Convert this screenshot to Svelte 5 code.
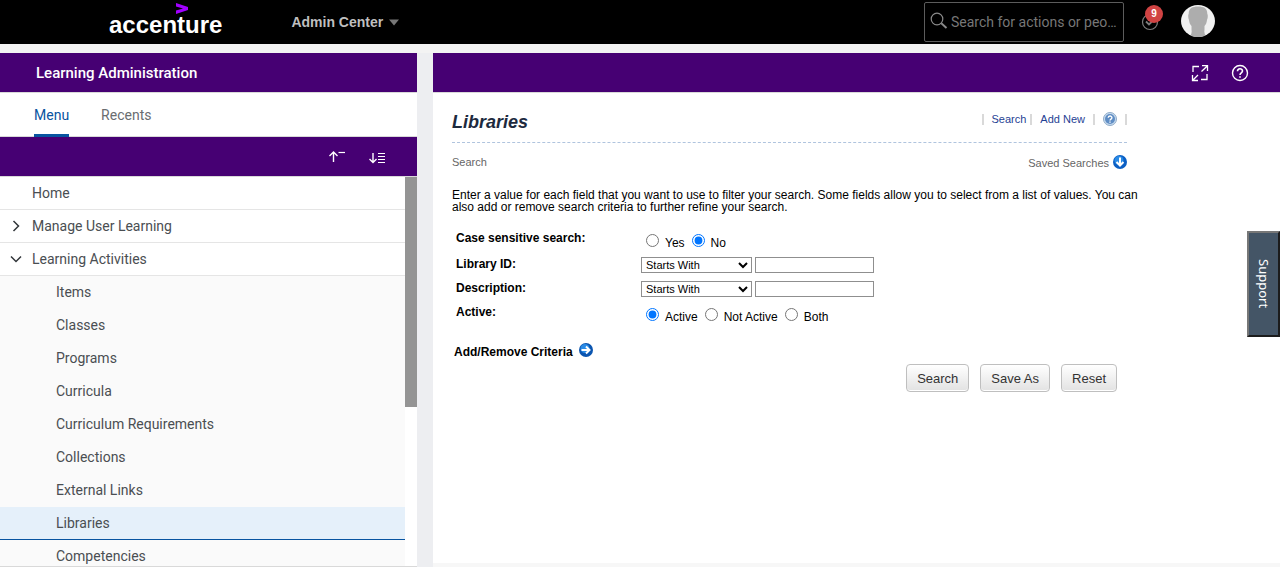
<script>
  const activities = [
    'Items',
    'Classes',
    'Programs',
    'Curricula',
    'Curriculum Requirements',
    'Collections',
    'External Links',
    'Libraries',
    'Competencies'
  ];
  let current = $state('Libraries');
  let tab = $state('Menu');
  let caseSensitive = $state('No');
  let active = $state('Active');
</script>

<div class="page">
  <header class="topbar">
    <a class="logo" href="#home" aria-label="accenture">
      <svg class="caret" width="14" height="13" viewBox="0 0 14 13" aria-hidden="true">
        <path d="M1 1 L13 5 V8 L1 12 V8.600 L8 6.500 L1 4.400 Z" fill="#a100ff" />
      </svg>
      <span>accenture</span>
    </a>
    <button class="module">
      Admin Center
      <svg width="10" height="7" viewBox="0 0 10 7" aria-hidden="true"><path d="M0 0.500H10L5 6.500Z" fill="#777" /></svg>
    </button>
    <div class="tools">
      <label class="finder">
        <svg width="18" height="18" viewBox="0 0 18 18" fill="none" stroke="#8a8a8a" aria-hidden="true">
          <circle cx="7" cy="7" r="5.800" stroke-width="1.200" /><path d="M11.300 11.300L16.500 16" stroke-width="1.900" />
        </svg>
        <input type="text" aria-label="Search for actions or people" placeholder="Search for actions or people" />
      </label>
      <button class="todo" aria-label="To do">
        <svg width="18" height="18" viewBox="0 0 18 18" fill="none" stroke="#7d7d7d" aria-hidden="true">
          <circle cx="9" cy="9" r="7.500" stroke-width="1.200" /><path d="M5 8.500L8 11.500L13 6.500" stroke-width="1.800" />
        </svg>
        <span class="badge">9</span>
      </button>
      <button class="avatar" aria-label="Profile">
        <svg width="34" height="32" viewBox="0 0 34 32" aria-hidden="true">
          <ellipse cx="17" cy="16" rx="17" ry="16" fill="#f1f1f1" />
          <path d="M17 1.500C11 1.500 7.500 3.500 7.700 9C7 9.500 7 13 8 15C8.300 17.500 9 19.500 10.500 21V25C11 27 10.500 28.500 9.500 30.400C14 32.500 20 32.500 24.500 30.400C23.500 28.500 23 27 23.500 25V21C25 19.500 25.700 17.500 26 15C27 13 27 9.500 26.300 9C26.500 3.500 23 1.500 17 1.500Z" fill="#adadad" />
        </svg>
      </button>
    </div>
  </header>

  <div class="columns">
    <aside class="side">
      <h1 class="band">Learning Administration</h1>
      <div class="tabs">
        {#each ['Menu', 'Recents'] as name}
          <button class:on={tab === name} onclick={() => (tab = name)}>{name}</button>
        {/each}
      </div>
      <div class="band sorters">
        <button aria-label="Collapse all">
          <svg width="18" height="16" viewBox="0 0 18 16" fill="none" stroke="#fff" aria-hidden="true">
            <path d="M5.500 13V3M1.500 7L5.500 3L9.500 7" stroke-width="1.400" /><path d="M10.500 3.500H17" stroke-width="1.200" />
          </svg>
        </button>
        <button aria-label="Expand all">
          <svg width="18" height="16" viewBox="0 0 18 16" fill="none" stroke="#fff" aria-hidden="true">
            <path d="M5 4V14M1.500 10L5 13.500L8.500 10" stroke-width="1.400" /><path d="M10 4.500H17M10 7.500H17M10 10.500H17M10 13.500H17" />
          </svg>
        </button>
      </div>
      <div class="scroller">
        <nav>
          <a class="top" href="#start"><span class="arrow"></span>Home</a>
          <a class="top" href="#users">
            <span class="arrow"><svg width="12" height="12" viewBox="0 0 12 12" aria-hidden="true"><path d="M3.500 1L8.500 6L3.500 11" /></svg></span>Manage User Learning
          </a>
          <a class="top" href="#activities">
            <span class="arrow"><svg width="12" height="12" viewBox="0 0 12 12" aria-hidden="true"><path d="M1 3.500L6 8.500L11 3.500" /></svg></span>Learning Activities
          </a>
          {#each activities as name}
            <a class="sub" class:chosen={current === name} href="#{name}" onclick={() => (current = name)}>{name}</a>
          {/each}
        </nav>
        <div class="track"><div class="thumb"></div></div>
      </div>
    </aside>

    <main>
      <div class="band actions">
        <button aria-label="Full screen">
          <svg width="18" height="18" viewBox="0 0 18 18" fill="none" stroke="#fff" stroke-width="1.300" aria-hidden="true">
            <path d="M2 8V2.500H8M16 10V15.500H10M11 1.700H16.500V7M16.500 1.700L10.500 7.500M1.500 11V16.500H7M1.500 16.500L7 11" />
          </svg>
        </button>
        <button aria-label="Help">
          <svg width="18" height="18" viewBox="0 0 18 18" fill="none" stroke="#fff" stroke-width="1.400" aria-hidden="true">
            <circle cx="9" cy="9" r="7.500" /><path d="M6.500 7.300C6.500 4 11.500 4 11.500 7C11.500 9 9 8.800 9 11M9 12.300V13.800" stroke-width="1.600" />
          </svg>
        </button>
      </div>
      <div class="content">
        <div class="heading">
          <h2>Libraries</h2>
          <div class="links">
            <i></i><a class="tight" href="#search">Search</a><i></i><a href="#new">Add New</a><i></i>
            <a href="#help" aria-label="Help">
              <svg width="14" height="14" viewBox="0 0 14 14" aria-hidden="true">
                <circle cx="7" cy="7" r="6.500" fill="#c9dcef" stroke="#8fabc8" />
                <circle cx="7" cy="7" r="5" fill="#5f8dc4" />
                <path d="M5.200 5.800C5.200 3.500 8.900 3.500 8.900 5.700C8.900 7.200 7 7 7 8.600M7 9.400V10.700" fill="none" stroke="#fff" stroke-width="1.400" />
              </svg>
            </a><i></i>
          </div>
        </div>
        <div class="crumbs">
          <span>Search</span>
          <a href="#saved">
            <span>Saved Searches</span>
            <svg width="14" height="14" viewBox="0 0 14 14" aria-hidden="true">
              <circle cx="7" cy="7" r="7" fill="#0b5fc4" /><circle cx="6" cy="5.500" r="4.500" fill="#2a8be6" />
              <path d="M7 2.500V10M3.500 7L7 10.500L10.500 7" fill="none" stroke="#fff" stroke-width="2" />
            </svg>
          </a>
        </div>
        <p>
          Enter a value for each field that you want to use to filter your search. Some fields allow you to select from a
          list of values. You can also add or remove search criteria to further refine your search.
        </p>
        <form onsubmit={(e) => e.preventDefault()}>
          <div class="row" role="radiogroup" aria-labelledby="case-label">
            <span class="name" id="case-label">Case sensitive search:</span>
            <div class="radios">
              {#each ['Yes', 'No'] as value}
                <label><input type="radio" name="case" {value} bind:group={caseSensitive} /><span>{value}</span></label>
              {/each}
            </div>
          </div>
          <div class="row">
            <label class="name" for="library">Library ID:</label>
            <div class="pair">
              <select aria-label="Library ID match"><option>Starts With</option><option>Contains</option></select>
              <input id="library" type="text" />
            </div>
          </div>
          <div class="row">
            <label class="name" for="description">Description:</label>
            <div class="pair">
              <select aria-label="Description match"><option>Starts With</option><option>Contains</option></select>
              <input id="description" type="text" />
            </div>
          </div>
          <div class="row" role="radiogroup" aria-labelledby="active-label">
            <span class="name" id="active-label">Active:</span>
            <div class="radios">
              {#each ['Active', 'Not Active', 'Both'] as value}
                <label><input type="radio" name="active" {value} bind:group={active} /><span>{value}</span></label>
              {/each}
            </div>
          </div>
          <a class="criteria" href="#criteria">
            <span>Add/Remove Criteria</span>
            <svg width="14" height="14" viewBox="0 0 14 14" aria-hidden="true">
              <circle cx="7" cy="7" r="7" fill="#0b55b0" /><circle cx="6" cy="5.500" r="4.500" fill="#2a8be6" />
              <path d="M2.500 7H10M7 3.500L10.500 7L7 10.500" fill="none" stroke="#fff" stroke-width="2" />
            </svg>
          </a>
          <div class="buttons">
            <button type="submit">Search</button>
            <button type="button">Save As</button>
            <button type="reset">Reset</button>
          </div>
        </form>
      </div>
    </main>
  </div>
  <button class="support">Support</button>
</div>

<style>
  :global(body) {
    margin: 0;
  }
  .page,
  .page * {
    box-sizing: border-box;
  }
  .page {
    display: flex;
    flex-direction: column;
    height: 100vh;
    overflow: hidden;
    background: #edeef1;
    font-family: 'Liberation Sans', Arial, sans-serif;
    font-size: 12px;
    color: #000;
  }
  a {
    color: inherit;
    text-decoration: none;
  }
  button {
    font-family: inherit;
    cursor: pointer;
  }
  svg {
    display: block;
    flex: none;
  }

  .topbar {
    flex: none;
    display: flex;
    align-items: center;
    height: 53px;
    padding: 0 65px 0 109px;
    background: #000;
    border-bottom: 9px solid #f3f3f3;
  }
  .logo {
    display: flex;
    flex-direction: column;
    padding-bottom: 8px;
    color: #fff;
    font-size: 24px;
    font-weight: 700;
    line-height: 20px;
  }
  .caret {
    margin-left: 66px;
  }
  .module {
    display: flex;
    align-items: center;
    gap: 6px;
    margin-left: 69px;
    padding: 0;
    border: 0;
    background: none;
    color: #bfbfbf;
    font-size: 14px;
    font-weight: 700;
  }
  .tools {
    display: flex;
    align-items: center;
    margin-left: auto;
  }
  .finder {
    display: flex;
    gap: 3px;
    width: 200px;
    height: 40px;
    padding: 9px 5px 0;
    border: 1px solid #5c5c5c;
    border-radius: 2px;
  }
  .finder input {
    flex: 1;
    min-width: 0;
    height: 20px;
    padding: 0;
    border: 0;
    outline: 0;
    background: none;
    color: #ccc;
    font-family: Roboto, sans-serif;
    font-size: 14px;
    text-overflow: ellipsis;
  }
  .finder input::placeholder {
    color: #777;
  }
  .todo {
    position: relative;
    margin-left: 17px;
    padding: 0;
    border: 0;
    background: none;
  }
  .badge {
    position: absolute;
    top: -8px;
    left: 4px;
    width: 18px;
    height: 18px;
    border-radius: 50%;
    background: #d04343;
    color: #fff;
    font-size: 10px;
    font-weight: 700;
    line-height: 18px;
  }
  .avatar {
    margin-left: 22px;
    padding: 0 0 2px;
    border: 0;
    background: none;
  }

  .columns {
    flex: 1;
    display: flex;
    gap: 16px;
    min-height: 0;
  }
  .band {
    flex: none;
    display: flex;
    align-items: center;
    height: 40px;
    margin: 0;
    border-bottom: 1px solid #d9d9d9;
    background: #460073;
    color: #fff;
  }
  .band button {
    padding: 0;
    border: 0;
    background: none;
  }
  .side {
    flex: 0 0 417px;
    display: flex;
    flex-direction: column;
    background: #fff;
    border-bottom: 1px solid #d9d9d9;
    font-family: Roboto, sans-serif;
    font-size: 14px;
    color: #4a4e52;
  }
  h1 {
    padding-left: 36px;
    font-size: 15px;
    font-weight: 500;
  }
  .tabs {
    flex: none;
    display: flex;
    gap: 32px;
    height: 44px;
    padding-left: 34px;
    border-bottom: 1px solid #d9d9d9;
  }
  .tabs button {
    height: 44px;
    padding: 3px 0 0;
    border: 0;
    border-bottom: 3px solid transparent;
    border-radius: 2px 2px 0 0;
    background: none;
    color: #6a6d70;
    font-size: 14px;
  }
  .tabs .on {
    border-bottom-color: #0854a0;
    color: #0854a0;
  }
  .sorters {
    justify-content: flex-end;
    gap: 22px;
    padding-right: 31px;
  }
  .scroller {
    flex: 1;
    display: flex;
    min-height: 0;
  }
  nav {
    flex: 1;
    overflow: hidden;
    background: #fafafa;
  }
  .top {
    display: flex;
    align-items: center;
    height: 33px;
    border-bottom: 1px solid #e5e5e5;
    background: #fff;
  }
  .arrow {
    width: 32px;
    padding-left: 10px;
  }
  .arrow path {
    fill: none;
    stroke: #32363a;
    stroke-width: 1.5;
  }
  .sub {
    display: flex;
    align-items: center;
    height: 33px;
    padding-left: 56px;
    border-bottom: 1px solid transparent;
  }
  .chosen {
    background: #e5f0fa;
    border-bottom-color: #0854a0;
  }
  .track {
    width: 12px;
    background: #fff;
  }
  .thumb {
    height: 59%;
    background: #949494;
  }

  main {
    flex: 1;
    min-width: 0;
    background: #fff;
    border-bottom: 4px solid #f7f7f7;
  }
  .actions {
    justify-content: flex-end;
    gap: 22px;
    padding-right: 31px;
  }
  .content {
    max-width: 694px;
    padding-left: 19px;
  }
  .heading {
    display: flex;
    align-items: flex-start;
    justify-content: space-between;
    height: 50px;
    padding-top: 18px;
    border-bottom: 1px dashed #b0c4de;
  }
  h2 {
    margin: 0;
    color: #1d2a3e;
    font-size: 18px;
    font-style: italic;
    line-height: 22px;
  }
  .links {
    display: flex;
    align-items: center;
    height: 16px;
    color: #1f3f94;
    font-size: 11px;
  }
  .links i {
    width: 2px;
    height: 11px;
    background: #d9d9d9;
  }
  .links a {
    margin: 0 8px;
  }
  .links .tight {
    margin-right: 4px;
  }
  .crumbs {
    display: flex;
    align-items: center;
    justify-content: space-between;
    height: 38px;
    color: #666;
    font-size: 11px;
  }
  .crumbs a {
    display: flex;
    gap: 4px;
  }
  .crumbs a span,
  .criteria span {
    padding-top: 2px;
  }
  p {
    margin: 8px -16px 0 0;
    line-height: 12px;
  }
  form {
    display: flex;
    flex-direction: column;
    padding: 18px 10px 0 4px;
  }
  .row {
    display: flex;
    height: 24px;
  }
  .row:first-child {
    height: 26px;
  }
  .name {
    width: 185px;
    font-weight: 700;
    line-height: 14px;
  }
  .radios {
    display: flex;
    align-items: flex-start;
    padding: 3px 0 0 5px;
    gap: 7px;
  }
  .radios label {
    display: flex;
    gap: 6px;
  }
  .radios input {
    width: 13px;
    height: 13px;
    margin: 0;
  }
  .radios span {
    padding-top: 2px;
    line-height: 14px;
  }
  .pair {
    display: flex;
    gap: 3px;
  }
  .pair select,
  .pair input {
    height: 16px;
    border: 1px solid #8f8f8f;
    border-radius: 0;
    background: #fff;
    font-family: inherit;
    font-size: 11px;
  }
  .pair select {
    width: 111px;
    padding: 0;
  }
  .pair input {
    width: 119px;
    padding: 0 2px;
  }
  .criteria {
    display: flex;
    gap: 6px;
    margin: 14px 0 0 -2px;
    font-weight: 700;
  }
  .buttons {
    display: flex;
    justify-content: flex-end;
    gap: 11px;
    margin-top: 5px;
  }
  .buttons button {
    height: 28px;
    padding: 0 10px;
    border: 1px solid #bfbfbf;
    border-radius: 4px;
    background: linear-gradient(#fff, #e2e2e2);
    box-shadow: inset 0 -1px #fff;
    color: #333;
    font-size: 13px;
  }
  .support {
    position: absolute;
    top: 231px;
    right: 0;
    width: 33px;
    height: 106px;
    padding: 0;
    border: 2px solid;
    border-color: #777 #1c1c1c #1c1c1c #777;
    background: #445566;
    color: #fff;
    font-family: 'Noto Sans', sans-serif;
    font-size: 13px;
    writing-mode: vertical-rl;
  }
</style>
